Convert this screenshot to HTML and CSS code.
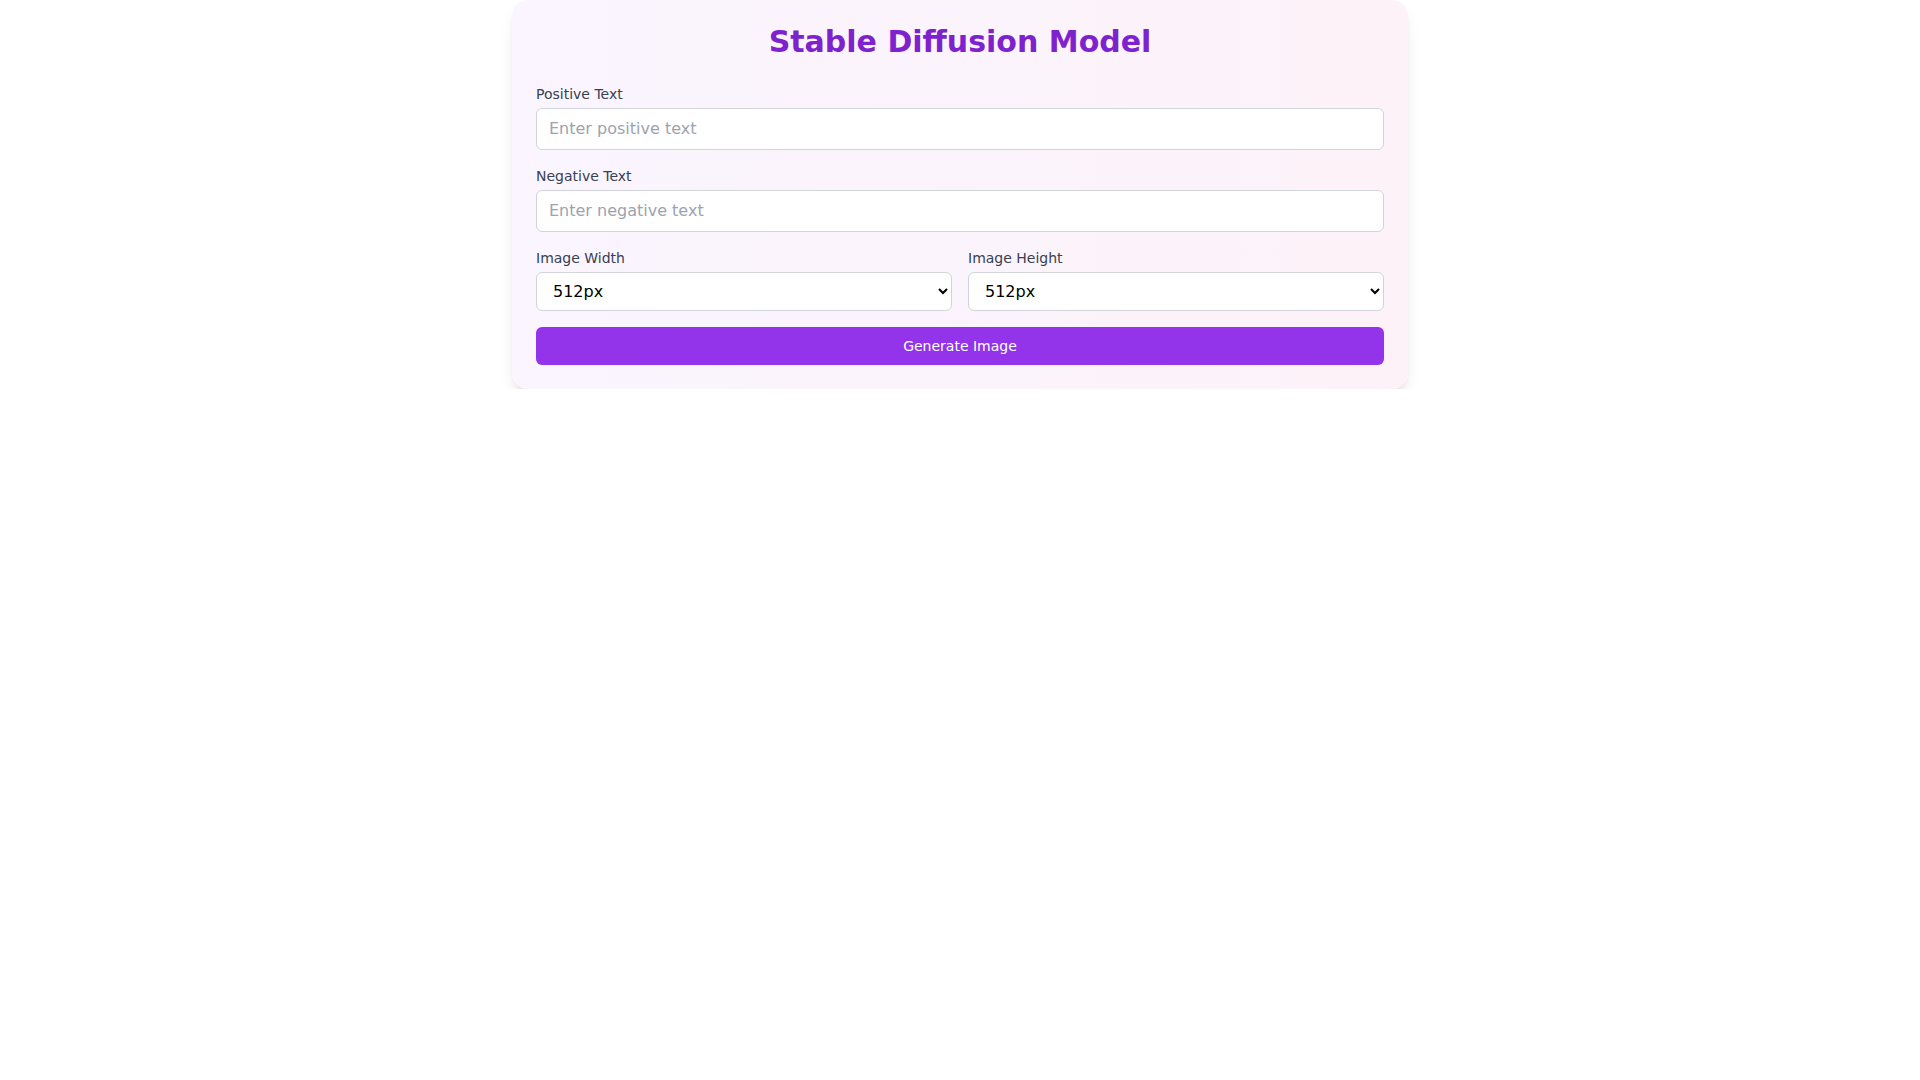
FILE: index.html
```html
<!DOCTYPE html>
<html>
<head>
<meta charset="utf-8">
<title>Stable Diffusion Model</title>
<link rel="stylesheet" href="styles.css">
</head>
<body>
<div class="card">
  <h1 class="title">Stable Diffusion Model</h1>
  <form class="form">
    <div class="field">
      <label class="label" for="pos">Positive Text</label>
      <input class="input" id="pos" type="text" placeholder="Enter positive text">
    </div>
    <div class="field">
      <label class="label" for="neg">Negative Text</label>
      <input class="input" id="neg" type="text" placeholder="Enter negative text">
    </div>
    <div class="row">
      <div class="field">
        <label class="label" for="w">Image Width</label>
        <select class="select" id="w">
          <option>512px</option>
          <option>768px</option>
          <option>1024px</option>
        </select>
      </div>
      <div class="field">
        <label class="label" for="h">Image Height</label>
        <select class="select" id="h">
          <option>512px</option>
          <option>768px</option>
          <option>1024px</option>
        </select>
      </div>
    </div>
    <button class="button" type="button">Generate Image</button>
  </form>
</div>
</body>
</html>
```

FILE: styles.css
```css
* { box-sizing: border-box; }
html, body { margin: 0; padding: 0; background: #ffffff; }
body { font-family: "DejaVu Sans", sans-serif; }

.card {
  width: 896px;
  margin: 0 auto;
  padding: 24px;
  border-radius: 16px;
  background: linear-gradient(to right, #faf5ff, #fdf2f8);
  box-shadow: 0 10px 15px -3px rgba(0,0,0,0.1), 0 4px 6px -4px rgba(0,0,0,0.1);
}

.title {
  margin: 0 0 24px 0;
  font-size: 30px;
  line-height: 36px;
  font-weight: 700;
  color: #7e22ce;
  text-align: center;
}

.form {
  display: flex;
  flex-direction: column;
  gap: 16px;
}

.field {
  display: flex;
  flex-direction: column;
  gap: 4px;
  min-width: 0;
}

.label {
  font-size: 14px;
  line-height: 20px;
  color: #374151;
}

.input {
  display: block;
  width: 100%;
  height: 42px;
  padding: 7px 12px 9px 12px;
  font-family: "DejaVu Sans", sans-serif;
  font-size: 16px;
  line-height: 24px;
  color: #111827;
  background: #ffffff;
  border: 1px solid #d1d5db;
  border-radius: 6px;
  outline: none;
}
.input::placeholder { color: #9ca3af; }

.row {
  display: grid;
  grid-template-columns: 1fr 1fr;
  gap: 16px;
}

.select {
  display: block;
  width: 100%;
  height: 39px;
  padding: 8px 8px 8px 12px;
  font-family: "DejaVu Sans", sans-serif;
  font-size: 16px;
  color: #000000;
  background-color: #ffffff;
  border: 1px solid #d1d5db;
  border-radius: 6px;
}

.button {
  display: block;
  width: 100%;
  height: 38px;
  padding: 0;
  border: none;
  border-radius: 6px;
  background: #9333ea;
  color: #ffffff;
  font-family: "DejaVu Sans", sans-serif;
  font-size: 14px;
  line-height: 20px;
  cursor: pointer;
}
```
